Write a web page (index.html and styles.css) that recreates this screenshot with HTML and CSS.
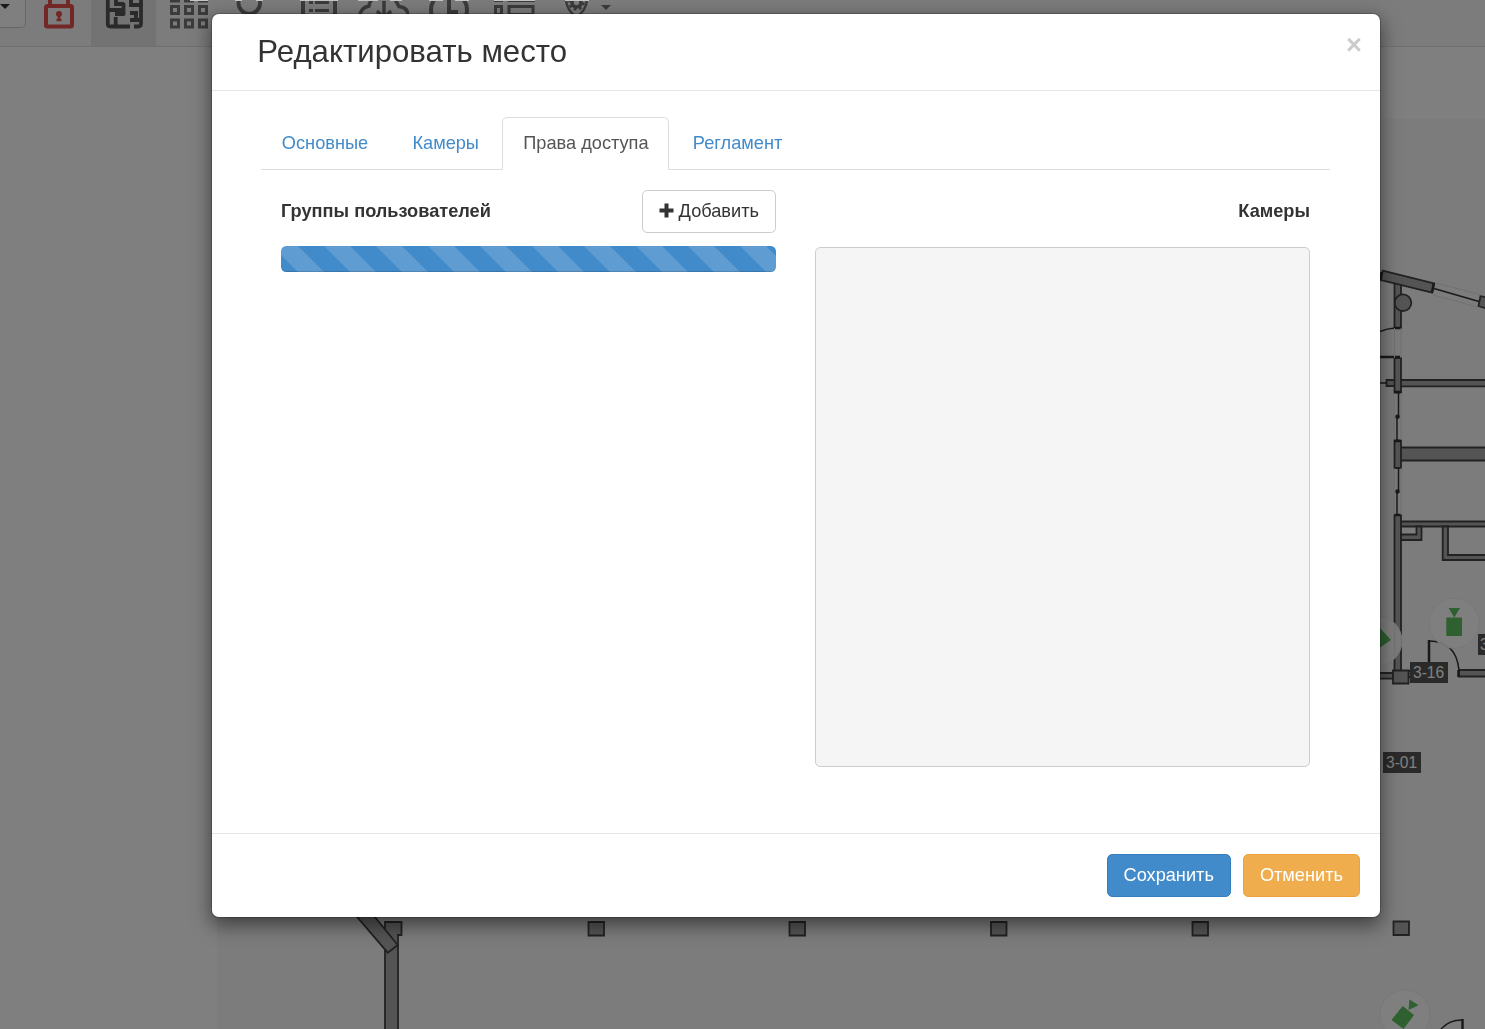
FILE: index.html
```html
<!DOCTYPE html>
<html lang="ru">
<head>
    <meta charset="UTF-8">
    <meta name="viewport" content="width=device-width, initial-scale=1.0">
    <title>Редактировать место</title>
    <link rel="stylesheet" href="styles.css">
</head>
<body>

<div class="page">
    <div class="toolbar">
        <div class="toolbar-select"><span class="caret"></span></div>
        <div class="tool tool-lock">
            <svg viewBox="0 0 65 46"><path d="M24 6V0M42 6V0" stroke-width="4"/><rect x="20" y="6" width="26" height="20.500" rx="1.500" stroke-width="4"/><circle cx="33" cy="14" r="3" class="solid"/><path d="M33 14v7M30.500 20h5" stroke-width="2.500"/></svg>
        </div>
        <div class="tool active">
            <svg viewBox="0 0 65 46"><path d="M16.800 0v24q0 2.500 2.500 2.500H39M43 26.500h4q3 0 3-3V0M17 10h15M32.500 3v12.500M24 14h9M25 0v4h8M24.700 17v9M40 0v5h10M39 13h8M45 12v8M39 20h11" stroke-width="3.800"/></svg>
        </div>
        <div class="tool">
            <svg viewBox="0 0 65 46"><path d="M15.500-6h7v7h-7zM29.500-6h7v7h-7zM43.500-6h7v7h-7zM15.500 6.500h7v7h-7zM29.500 6.500h7v7h-7zM43.500 6.500h7v7h-7zM15.500 20h7v7h-7zM29.500 20h7v7h-7zM43.500 20h7v7h-7z" stroke-width="3"/></svg>
        </div>
        <div class="tool">
            <svg viewBox="0 0 65 46"><circle cx="28.300" cy="3" r="10.800" stroke-width="3.800"/></svg>
        </div>
        <div class="tool">
            <svg viewBox="0 0 65 46"><path d="M17 0v20h32V0" stroke-width="4"/><path d="M23 2.500h4M29 2.500h14M23 10.500h4M29 10.500h14" stroke-width="3"/></svg>
        </div>
        <div class="tool">
            <svg viewBox="0 0 65 46"><path d="M9 16q0-8 9-10q1-7 7-9M57 16q0-9-9-9.500l-4-7M33 1v18M26 11l7 7 7-7" stroke-width="3.500"/></svg>
        </div>
        <div class="tool">
            <svg viewBox="0 0 65 46"><circle cx="33" cy="10" r="18" stroke-width="4"/><path d="M33 0v12h9" stroke-width="4"/></svg>
        </div>
        <div class="tool">
            <svg viewBox="0 0 65 46"><path d="M14.500 6.500h6v8h-6zM28 6.500h24v8H28z" stroke-width="3"/><path d="M13 1.500h9M26.500 1.500H54" stroke-width="1"/></svg>
        </div>
        <div class="tool">
            <svg viewBox="0 0 65 46"><path d="M20 0q1 11 10.500 17Q40 11 41 0" stroke-width="2.500"/><circle cx="30.500" cy="2.500" r="4.500" stroke-width="3.500"/><circle cx="30.500" cy="2.500" r="7" stroke-width="2.500" stroke-dasharray="2.750"/><path d="M55 5h10l-5 5z" class="solid"/></svg>
        </div>
    </div>

    <div class="map">
        <svg class="plan" viewBox="217 119 1268 910">
            <!-- walls -->
            <g class="wall">
                <path d="M1394.500 280h6.500v48h-6.500z"/>
                <path d="M1382.700 270.700l51.300 12.800-1.800 9.200-51.200-12.700z"/>
                <path d="M1480.500 296l12 3-2 11-12-4z"/>
                <circle cx="1403" cy="302.700" r="8.300"/>
                <path d="M1386.500 380h8v6h-8zM1401 380h90v6.300h-90zM1394.500 358h6.500v34.500h-6.500z"/>
                <path d="M1401 447.500h90v13h-90zM1394.500 440.500h6.500v27.500h-6.500z"/>
                <path d="M1394.500 515h6.500v157h-6.500zM1401 521.500h90v5h-90z"/>
                <path d="M1401 534.500h15.500v-8h5v13.500h-20.500z"/>
                <path d="M1442.700 526.500h5.300v28.500h43v5h-48.300z"/>
                <path d="M1370 673h23v5.700h-23zM1408 671h20v6h-20zM1459 670h32v6.500h-32z"/>
                <path d="M1393 670.500h15.500v13H1393z"/>
                <path d="M588.500 922h15.500v13.500h-15.500zM789.500 922h15.500v13.500h-15.500zM991 922h15.500v13.500h-15.500zM1192.500 922h15.500v13.500h-15.500zM1393.500 921.500h15.500v13.500h-15.500z"/>
                <path d="M385 922h16.500v13H398v100h-13z"/>
                <path d="M340 897l17-2 40.700 50-10 7.700z"/>
            </g>
            <!-- doors and windows -->
            <g class="opening">
                <path d="M1434 288.500l45 13M1380 331.500q7-3 15-3.500M1380 383h7M1398.500 393v24M1397 417v23M1398.500 468v23M1397 491v24M1429 641q27 0 30 29M1441 1029q8-9 21-9"/>
                <path d="M1380 357h20M1429 640v24M1462.500 1019v12M1458.500 670v7M1394 328h7M1394 392h7M1394 441h7M1394 515h7M1381.500 272l-1 8M1434 283l-2 9" stroke-width="2.500"/>
                <circle cx="1397.500" cy="416.700" r="1.500"/>
                <circle cx="1397.500" cy="491.500" r="1.500"/>
            </g>
            <path class="guide" d="M1436 283l45 12M1433 295l44 12M1394.500 328v30M1401 328v30M1394 393v47M1401 393v47M1394 468v47M1401 468v47"/>
            <!-- cameras -->
            <g class="camera" transform="translate(1454.300 623.300)">
                <circle r="25"/><path d="M-5.700-15.300H5.700L0-5.700zM-8-5.700H7.700v18.500H-8z"/>
            </g>
            <g class="camera" transform="translate(1377 641)">
                <circle r="25"/><path d="M2-14L14-1 1 8-10-6z"/>
            </g>
            <g class="camera" transform="translate(1405 1015)">
                <circle r="25"/><path d="M4.500-15.500L13.500-9.800 3.500-5zM-2.300-9L9 0-1.500 14-13.500 5z"/>
            </g>
        </svg>
        <span class="label label-316">3-16</span>
        <span class="label label-301">3-01</span>
        <span class="label label-edge">3</span>
    </div>
</div>

<div class="backdrop">
    <svg class="top-edge" viewBox="0 0 960 1"><path d="M190 .5h18M235 .5h7M256 .5h7M300 .5h38M358 .5h20M390 .5h12M429 .5h14M455 .5h14M494 .5h41M565 .5h24"/></svg>
</div>

<div class="modal">
    <div class="modal-header">
        <h4 class="modal-title">Редактировать место</h4>
        <button class="close">×</button>
    </div>

    <div class="modal-body">
        <ul class="tabs">
            <li><a>Основные</a></li>
            <li><a>Камеры</a></li>
            <li class="active"><a>Права доступа</a></li>
            <li><a>Регламент</a></li>
        </ul>

        <div class="columns">
            <div class="column">
                <div class="column-head">
                    <strong>Группы пользователей</strong>
                    <button class="btn btn-default">
                        <svg class="plus" viewBox="0 0 15 15"><path d="M5.500.5h4v5h5v4h-5v5h-4v-5h-5v-4h5z"/></svg>
                        Добавить
                    </button>
                </div>
                <div class="progress"></div>
            </div>
            <div class="column">
                <div class="column-head column-head-right">
                    <strong>Камеры</strong>
                </div>
                <div class="camera-list"></div>
            </div>
        </div>
    </div>

    <div class="modal-footer">
        <button class="btn btn-primary">Сохранить</button>
        <button class="btn btn-warning">Отменить</button>
    </div>
</div>

</body>
</html>
```

FILE: styles.css
```css
* {
    box-sizing: border-box;
}

body {
    margin: 0;
    height: 1029px;
    overflow: hidden;
    font-family: "Liberation Sans", Arial, sans-serif;
    font-size: 18.2px;
    line-height: 26px;
    color: #333;
    background: #fff;
}

.page {
    height: 1029px;
}

.toolbar {
    display: flex;
    height: 47px;
    background: #f8f8f8;
    border-bottom: 1px solid #e0e0e0;
}

.toolbar-select {
    width: 26px;
    height: 28px;
    border: 1px solid #ccc;
    border-width: 0 1px 1px 0;
    border-radius: 0 0 5px 0;
    background: #fff;
}

.caret {
    display: block;
    width: 10px;
    margin-top: 4px;
    border: 5px solid transparent;
    border-top-color: #333;
    border-bottom: 0;
}

.tool {
    width: 65px;
    height: 46px;
    color: #777;
}

.tool.active {
    background: #e7e7e7;
    color: #555;
}

.tool-lock {
    color: #e84e4e;
}

.tool svg {
    display: block;
    width: 65px;
    height: 46px;
    fill: none;
    stroke: currentColor;
}

.tool .solid {
    fill: currentColor;
    stroke: none;
}

.map {
    position: relative;
    margin: 72px 0 0 217px;
    height: 910px;
    background: #f8f8f8;
}

.plan {
    display: block;
    width: 1268px;
    height: 910px;
}

.wall {
    fill: #a8a8a8;
    stroke: #444;
    stroke-width: 1.8;
}

.opening {
    fill: none;
    stroke: #333;
    stroke-width: 1.5;
}

.opening circle {
    fill: #333;
}

.guide {
    fill: none;
    stroke: #e2e2e2;
}

.camera circle {
    fill: #fff;
    fill-opacity: .9;
    stroke: #f0f0f0;
}

.camera path {
    fill: #5cc060;
}

.label {
    position: absolute;
    height: 21px;
    padding: 0 3px;
    font-size: 15.6px;
    line-height: 21px;
    color: #fff;
    background: #555;
}

.label-316 {
    left: 1193px;
    top: 543px;
    width: 38px;
}

.label-301 {
    left: 1166px;
    top: 633px;
    width: 38px;
}

.label-edge {
    left: 1261px;
    top: 515px;
    padding: 0 1px 0 2px;
}

.backdrop {
    position: fixed;
    inset: 0;
    background: rgba(0, 0, 0, .5);
}

.top-edge {
    display: block;
    width: 960px;
    height: 1px;
    stroke: #c4c8c4;
}

.modal {
    position: absolute;
    left: 211px;
    top: 13px;
    display: flex;
    flex-direction: column;
    width: 1170px;
    height: 905px;
    background: #fff;
    background-clip: padding-box;
    border: 1px solid rgba(0, 0, 0, .2);
    border-radius: 7.8px;
    box-shadow: 0 6.5px 19.5px rgba(0, 0, 0, .5);
}

.modal-header {
    display: flex;
    justify-content: space-between;
    height: 77px;
    padding: 16px 18px 0 45.3px;
    border-bottom: 1px solid #e5e5e5;
}

.modal-title {
    margin: 0;
    font-size: 31.2px;
    font-weight: 500;
    line-height: 44px;
}

.close {
    height: 27px;
    margin-top: 1px;
    padding: 0;
    border: 0;
    background: none;
    font: bold 27.3px/27px "Liberation Sans", Arial, sans-serif;
    color: #000;
    opacity: .2;
}

.modal-body {
    flex: 1;
    padding: 26px 50px 0 49px;
}

.tabs {
    display: flex;
    height: 53px;
    margin: 0;
    padding: 0;
    list-style: none;
    border-bottom: 1px solid #ddd;
}

.tabs li {
    margin-right: 2.6px;
}

.tabs a {
    display: block;
    height: 53px;
    padding: 12px 19.85px;
    border: 1px solid transparent;
    border-radius: 5.2px 5.2px 0 0;
    color: #428bca;
}

.tabs .active a {
    color: #555;
    background: #fff;
    border-color: #ddd;
    border-bottom-color: transparent;
}

.columns {
    display: flex;
    gap: 39px;
    padding: 20px 20px 0;
}

.column {
    flex: 1;
}

.column-head {
    display: flex;
    justify-content: space-between;
    height: 43px;
    line-height: 43px;
}

.column-head-right {
    justify-content: flex-end;
}

.btn {
    height: 43px;
    padding: 0 16px 2px;
    border: 1px solid transparent;
    border-radius: 5.2px;
    font: 18.2px/26px "Liberation Sans", Arial, sans-serif;
    color: #fff;
}

.btn-default {
    color: #333;
    background: #fff;
    border-color: #ccc;
}

.btn-primary {
    background: #428bca;
    border-color: #357ebd;
}

.btn-warning {
    background: #f0ad4e;
    border-color: #eea236;
}

.plus {
    width: 15px;
    height: 15px;
    fill: #333;
    vertical-align: -1px;
}

.progress {
    height: 26px;
    margin-top: 13px;
    border-radius: 5.2px;
    background-color: #428bca;
    background-image: linear-gradient(45deg, rgba(255, 255, 255, .15) 25%, transparent 25%, transparent 50%, rgba(255, 255, 255, .15) 50%, rgba(255, 255, 255, .15) 75%, transparent 75%, transparent);
    background-size: 52px 52px;
    background-position: -9.5px 0;
    box-shadow: inset 0 -1px 0 rgba(0, 0, 0, .15);
}

.camera-list {
    height: 520px;
    margin-top: 14px;
    background: #f5f5f5;
    border: 1px solid #ccc;
    border-radius: 5.2px;
}

.modal-footer {
    display: flex;
    justify-content: flex-end;
    gap: 12px;
    height: 84px;
    padding: 20px 20px 0;
    border-top: 1px solid #e5e5e5;
}
```
